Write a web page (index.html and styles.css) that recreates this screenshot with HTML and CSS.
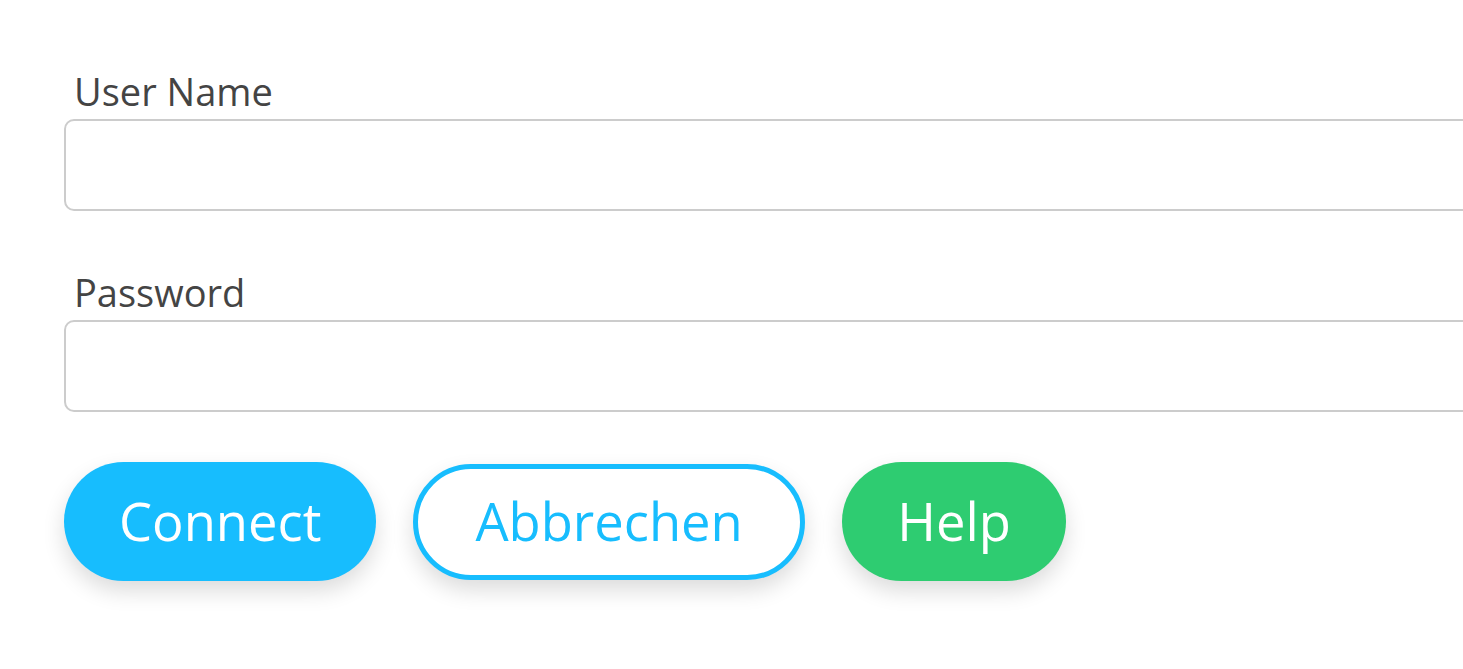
FILE: index.html
```html
<!DOCTYPE html>
<html>
<head>
<meta charset="utf-8">
<link rel="stylesheet" href="styles.css">
</head>
<body>
<form class="login">
  <div class="field">
    <label class="label">User Name</label>
    <input class="input" type="text">
  </div>
  <div class="field">
    <label class="label">Password</label>
    <input class="input" type="password">
  </div>
  <div class="actions">
    <button type="button" class="btn btn-primary">Connect</button>
    <button type="button" class="btn btn-outline">Abbrechen</button>
    <button type="button" class="btn btn-success">Help</button>
  </div>
</form>
</body>
</html>
```
FILE: styles.css
```css
html {
  overflow: hidden;
  background: #ffffff;
}

body {
  margin: 0;
  padding: 0;
  font-family: "Open Sans", "Liberation Sans", sans-serif;
}

.login {
  display: flex;
  flex-direction: column;
  padding: 66px 0 60px 64px;
  width: 1450px;
}

.field {
  display: flex;
  flex-direction: column;
  margin-bottom: 56px;
}

.field:nth-child(2) {
  margin-bottom: 50px;
}

.label {
  font-size: 38px;
  line-height: 50px;
  color: #444444;
  padding-left: 10px;
  margin-bottom: 3px;
}

.input {
  box-sizing: border-box;
  height: 92px;
  width: 100%;
  border: 2px solid #cccccc;
  border-radius: 10px;
  background: #ffffff;
  outline: none;
  font-family: inherit;
  font-size: 36px;
  padding: 0 16px;
}

.actions {
  display: flex;
  align-items: center;
  gap: 37px;
}

.btn {
  box-sizing: border-box;
  height: 119px;
  border-radius: 60px;
  border: none;
  padding: 0 55.5px;
  font-family: "Open Sans", "Liberation Sans", sans-serif;
  font-size: 52.5px;
  line-height: 1;
  cursor: pointer;
  box-shadow: 0 10px 22px rgba(0, 0, 0, 0.14);
}

.btn-primary {
  background: #17bdfe;
  color: #ffffff;
  padding: 0 55px;
}

.btn-outline {
  height: 116px;
  background: #ffffff;
  color: #17bdfe;
  border: 5px solid #17bdfe;
  padding: 0 57px;
}

.btn-success {
  background: #2ecc71;
  color: #ffffff;
}
```
